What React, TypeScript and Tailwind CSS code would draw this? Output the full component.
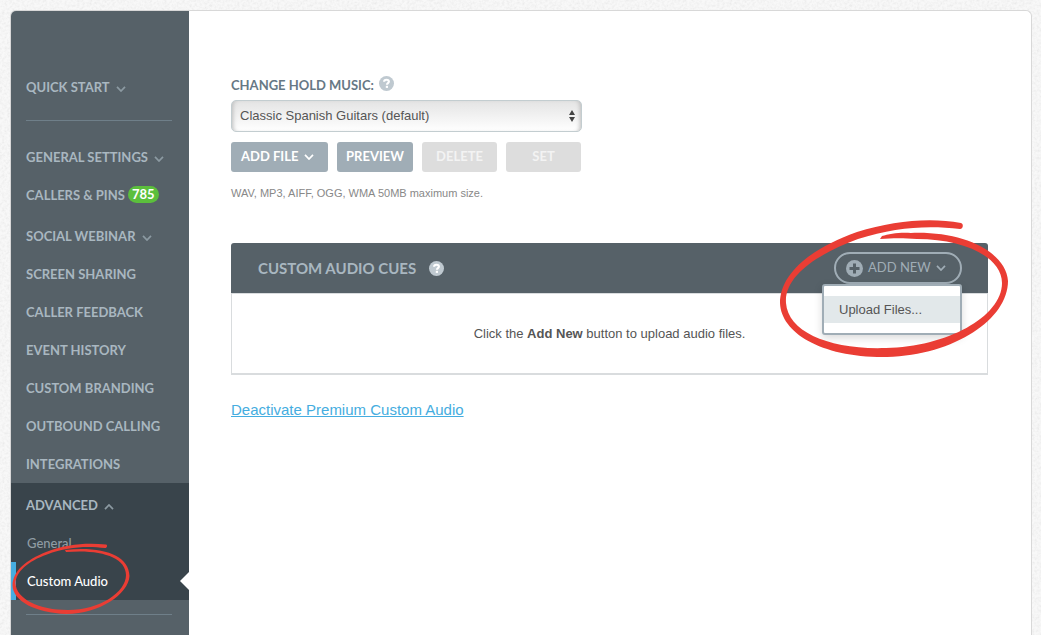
import { useState } from "react";

type NavItem = { label: string; caret?: boolean; badge?: number };

const navItems: NavItem[] = [
  { label: "Social Webinar", caret: true },
  { label: "Screen Sharing" },
  { label: "Caller Feedback" },
  { label: "Event History" },
  { label: "Custom Branding" },
  { label: "Outbound Calling" },
  { label: "Integrations" },
];

function Caret({ up = false, className = "" }: { up?: boolean; className?: string }) {
  return (
    <svg width="10" height="6" viewBox="0 0 10 6" fill="none" stroke="currentColor" className={className} aria-hidden="true">
      <path d={up ? "M1 5.2 5 1l4 4.2" : "M1 .8 5 5 9 .8"} strokeWidth="1.7" />
    </svg>
  );
}

function HelpIcon() {
  return (
    <svg width="15" height="15" viewBox="0 0 15 15" aria-hidden="true">
      <circle cx="7.5" cy="7.5" r="7.5" fill="#bfc9d0" />
      <path d="M5.1 5.8C5.1 4.4 6.1 3.7 7.5 3.7s2.4.7 2.4 1.9c0 1.5-2 1.4-2 3.1" fill="none" stroke="#fff" strokeWidth="2.1" />
      <rect x="6.8" y="9.8" width="2.2" height="2.1" fill="#fff" />
    </svg>
  );
}

function NavLink({ label, caret, badge }: NavItem) {
  return (
    <a href="#" className="flex h-[38px] items-center pt-[2px] pl-[15px] text-[13px] font-bold uppercase text-[#a9b7c0]">
      {label}
      {caret && <Caret className="mt-[2px] ml-[6px] text-[#8c9aa2]" />}
      {badge && (
        <span className="mb-[3px] ml-[3px] rounded-full bg-[#5bbf3c] px-1 text-[13px] leading-[17px] text-white">
          {badge}
        </span>
      )}
    </a>
  );
}

function Sidebar() {
  return (
    <nav className="w-[178px] shrink-0 rounded-tl-[5px] bg-[#566168] pt-[57px]">
      <NavLink label="Quick Start" caret />
      <hr className="mt-[14px] mr-[17px] mb-[17px] ml-[15px] border-[#6f7f89]" />
      <NavLink label="General Settings" caret />
      <NavLink label="Callers & Pins" badge={785} />
      <div className="pt-[3px]">
        {navItems.map((item) => (
          <NavLink key={item.label} {...item} />
        ))}
      </div>

      <div className="bg-[#39444b] pt-[3px]">
        <a href="#" className="flex h-[38px] items-center pt-[2px] pl-[15px] text-[13px] font-bold uppercase text-[#a9b7c0]">
          Advanced
          <Caret up className="mt-[2px] ml-[6px] text-[#8c9aa2]" />
        </a>
        <a href="#" className="flex h-[38px] items-center pt-[2px] pl-4 text-[13px] font-medium text-[#8f9ca4]">
          General
        </a>
        <a
          href="#"
          aria-current="page"
          className="relative flex h-[38px] items-center border-l-5 border-[#45ade0] pt-[2px] pl-[11px] text-[13px] font-medium text-white"
        >
          Custom Audio
          <svg width="9" height="18" viewBox="0 0 9 18" className="absolute top-[10px] right-0" aria-hidden="true">
            <path d="M9 0v18L0 9z" fill="#fff" />
          </svg>
          {/* hand-drawn ring */}
          <svg
            width="120"
            height="74"
            viewBox="0 0 120 74"
            fill="#ea3d34"
            className="pointer-events-none absolute -top-5 -left-[5px]"
            aria-hidden="true"
          >
            <path d="M95 2.500C76 .5 55 2 35 10 15 18 2 29 1.500 43c0 16 23 28 54 29 33 0 62-20 63-38C118 13 91 4 54 8l1 2c34-3 60 5 60 23 0 17-26 35-58 35C28 68 5 57 4.500 41 5 30 17 19 36 12.500 57 4 78 4 94 6c2 .2 3-3 1-3.500Z" />
          </svg>
        </a>
      </div>
      <hr className="mt-[14px] mr-[17px] mb-5 ml-[15px] border-[#6f7f89]" />
    </nav>
  );
}

function HoldMusic() {
  return (
    <section className="w-[351px]">
      <div className="flex h-[18px] items-start gap-[5px]">
        <label htmlFor="hold-music" className="text-[13px] leading-[19px] font-bold uppercase text-[#667885]">
          Change Hold Music:
        </label>
        <HelpIcon />
      </div>
      <div className="relative mt-[6px]">
        <select
          id="hold-music"
          className="block h-8 w-full appearance-none rounded-[5px] border border-[#c3cdd0] bg-linear-to-b from-[#e4e4e4] to-white px-2 font-['Liberation_Sans',Arial,sans-serif] text-[13px] text-[#555] shadow-[inset_4px_0_4px_-3px_#bbb,inset_-4px_0_4px_-3px_#bbb]"
        >
          <option>Classic Spanish Guitars (default)</option>
        </select>
        <svg width="6" height="12" viewBox="0 0 6 12" fill="#444" className="pointer-events-none absolute top-[10px] right-[7px]" aria-hidden="true">
          <path d="M3 0l3 5H0zM3 12l3-5H0z" />
        </svg>
      </div>
      <div className="mt-[10px] flex gap-[9px] text-[13px] font-bold uppercase text-white">
        <button className="flex h-[30px] w-[97px] items-center gap-[6px] rounded-[3px] bg-[#a0adb6] pl-[10px] uppercase">
          Add File
          <Caret />
        </button>
        <button className="h-[30px] w-[76px] rounded-[3px] bg-[#a0adb6] uppercase">Preview</button>
        <button disabled className="h-[30px] w-[75px] rounded-[3px] bg-[#ddd] uppercase text-[#f3f3f3]">
          Delete
        </button>
        <button disabled className="h-[30px] w-[75px] rounded-[3px] bg-[#ddd] uppercase text-[#f3f3f3]">
          Set
        </button>
      </div>
      <p className="mt-[13px] font-['Liberation_Sans',Arial,sans-serif] text-[11px] leading-4 text-[#888]">
        WAV, MP3, AIFF, OGG, WMA 50MB maximum size.
      </p>
    </section>
  );
}

function AddNewMenu() {
  const [open, setOpen] = useState(true);

  return (
    <div className="relative">
      <button
        onClick={() => setOpen(!open)}
        aria-expanded={open}
        className="flex h-8 w-32 items-center rounded-full border-2 border-[#a0adb6] pl-[10px] text-[13px] uppercase text-[#a0adb6]"
      >
        <svg width="17" height="17" viewBox="0 0 17 17" className="mr-[5px]" aria-hidden="true">
          <circle cx="8.500" cy="8.500" r="8.500" fill="#a0adb6" />
          <path d="M8.500 3.500v10M3.500 8.500h10" stroke="#566168" strokeWidth="3" />
        </svg>
        Add New
        <Caret className="ml-[5px]" />
      </button>
      {open && (
        <ul className="absolute top-8 right-0 -left-3 z-10 rounded-[3px] border-2 border-[#a0adb6] bg-white py-[10px] shadow-[0_3px_8px_rgba(0,0,0,0.15)]">
          <li>
            <a
              href="#"
              className="block bg-[#e2e8ea] pl-[15px] font-['Liberation_Sans',Arial,sans-serif] text-[13px] leading-[27px] text-[#555]"
            >
              Upload Files...
            </a>
          </li>
        </ul>
      )}
      {/* hand-drawn ring */}
      <svg
        width="232"
        height="142"
        viewBox="0 0 232 142"
        fill="#ea3d34"
        className="pointer-events-none absolute -top-[34px] -left-14 z-20 max-w-none"
        aria-hidden="true"
      >
        <path d="M183 5C151-1 115 3 79 14 34 30 2 55 2 85c1 30 42 55 107 54 68-2 121-38 121-76C228 34 186 13 133 15c-11-1-22 1-29 3l-2 3c13-1 24-1 37 0 47 0 85 18 85 44 0 34-56 64-116 65C52 132 10 114 8 85 6 57 42 35 80 21c37-12 70-14 102-10 3 0 4-5 1-6Z" />
      </svg>
    </div>
  );
}

export default function App() {
  return (
    <div className="relative flex min-h-screen flex-col bg-[#f8f8f8] pt-[10px] pr-[9px] pl-[10px] font-[Lato,sans-serif]">
      {/* paper grain */}
      <svg className="absolute inset-0 h-full w-full opacity-10" aria-hidden="true">
        <filter id="grain" x="0" y="0" width="100%" height="100%">
          <feTurbulence type="fractalNoise" baseFrequency="0.4" numOctaves="2" />
          <feColorMatrix values="1.5 0 0 0 0  1.5 0 0 0 0  1.5 0 0 0 0  0 0 0 0 1" />
        </filter>
        <rect width="100%" height="100%" filter="url(#grain)" />
      </svg>

      <div className="relative flex grow rounded-t-md border border-b-0 border-[#d8d8d8] bg-white">
        <Sidebar />
        <main className="grow px-[42px] pt-[65px]">
          <HoldMusic />

          <section className="mt-[42px] mr-px">
            <header className="flex h-[50px] items-center rounded-t-[3px] bg-[#566168] pr-[26px] pl-[27px]">
              <h2 className="mr-[13px] text-[15px] font-bold uppercase text-[#a9b7c0]">Custom Audio Cues</h2>
              <HelpIcon />
              <div className="ml-auto">
                <AddNewMenu />
              </div>
            </header>
            <p className="border border-b-2 border-[#d9dcde] pt-[30px] pb-[29px] text-center font-['Liberation_Sans',Arial,sans-serif] text-[13px] leading-5 text-[#555]">
              Click the <strong>Add New</strong> button to upload audio files.
            </p>
          </section>

          <a
            href="#"
            className="mt-[25px] inline-block font-['Liberation_Sans',Arial,sans-serif] text-[15px] leading-5 text-[#45ade0] underline"
          >
            Deactivate Premium Custom Audio
          </a>
        </main>
      </div>
    </div>
  );
}
